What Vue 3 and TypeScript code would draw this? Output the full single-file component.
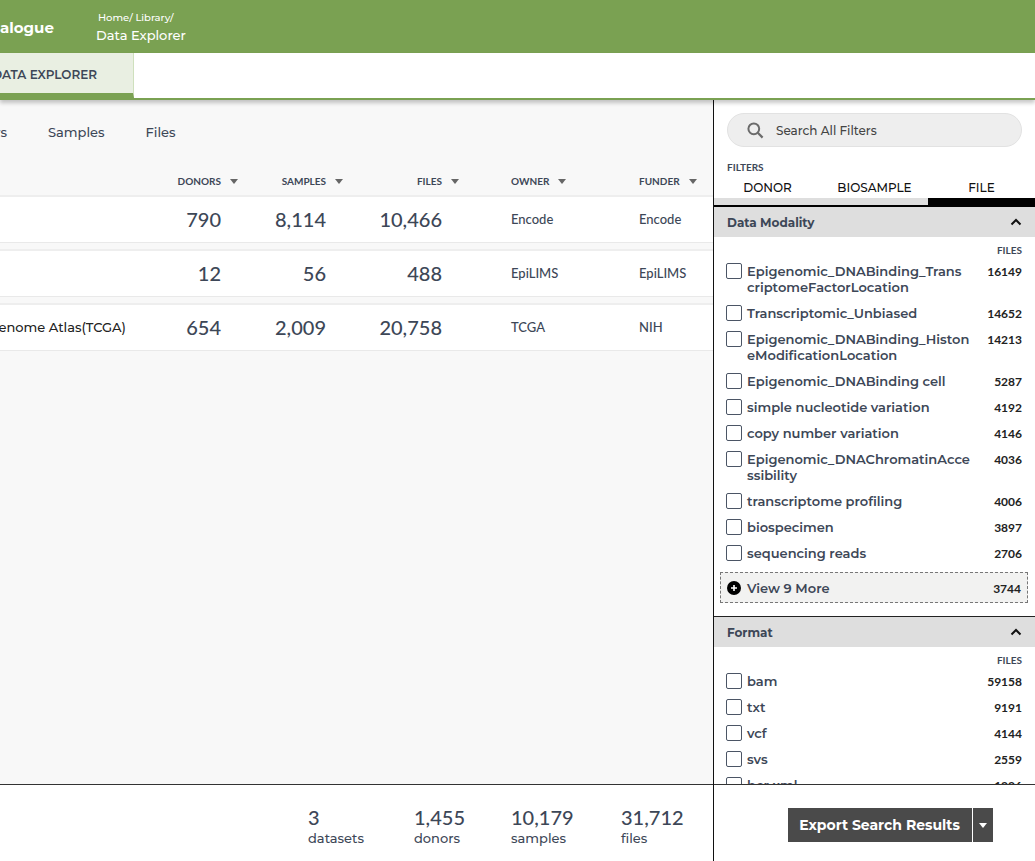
<script setup lang="ts">
import { ref } from 'vue'

interface Column { label: string; kind: string }
interface Dataset { name: string; donors: string; samples: string; files: string; owner: string; funder: string }
interface Option { label: string; count: string }
interface Section { title: string; options: Option[]; more?: Option }

const columns: Column[] = [
  { label: 'DONORS', kind: 'num' },
  { label: 'SAMPLES', kind: 'num' },
  { label: 'FILES', kind: 'num' },
  { label: 'OWNER', kind: 'text' },
  { label: 'FUNDER', kind: 'text' },
]

const datasets: Dataset[] = [
  { name: '', donors: '790', samples: '8,114', files: '10,466', owner: 'Encode', funder: 'Encode' },
  { name: '', donors: '12', samples: '56', files: '488', owner: 'EpiLIMS', funder: 'EpiLIMS' },
  { name: 'enome Atlas(TCGA)', donors: '654', samples: '2,009', files: '20,758', owner: 'TCGA', funder: 'NIH' },
]

const sections: Section[] = [
  {
    title: 'Data Modality',
    options: [
      { label: 'Epigenomic_DNABinding_Trans\ncriptomeFactorLocation', count: '16149' },
      { label: 'Transcriptomic_Unbiased', count: '14652' },
      { label: 'Epigenomic_DNABinding_Histon\neModificationLocation', count: '14213' },
      { label: 'Epigenomic_DNABinding cell', count: '5287' },
      { label: 'simple nucleotide variation', count: '4192' },
      { label: 'copy number variation', count: '4146' },
      { label: 'Epigenomic_DNAChromatinAcce\nssibility', count: '4036' },
      { label: 'transcriptome profiling', count: '4006' },
      { label: 'biospecimen', count: '3897' },
      { label: 'sequencing reads', count: '2706' },
    ],
    more: { label: 'View 9 More', count: '3744' },
  },
  {
    title: 'Format',
    options: [
      { label: 'bam', count: '59158' },
      { label: 'txt', count: '9191' },
      { label: 'vcf', count: '4144' },
      { label: 'svs', count: '2559' },
      { label: 'bcr xml', count: '1226' },
    ],
  },
]

const totals = [
  { value: '3', label: 'datasets' },
  { value: '1,455', label: 'donors' },
  { value: '10,179', label: 'samples' },
  { value: '31,712', label: 'files' },
]

const filterTabs = ['DONOR', 'BIOSAMPLE', 'FILE']
const activeFilter = ref('FILE')
const search = ref('')
const checked = ref<string[]>([])
</script>

<template>
  <div class="app">
    <header class="topbar">
      <a class="brand" href="#">alogue</a>
      <nav class="crumbs" aria-label="Breadcrumb">
        <span class="trail"><a href="#">Home/</a> <a href="#">Library/</a></span>
        <span class="here">Data Explorer</span>
      </nav>
    </header>
    <nav class="tabs"><a class="tab" href="#">DATA EXPLORER</a></nav>

    <div class="body">
      <div class="left">
        <main class="main">
          <nav class="views">
            <a class="view first" href="#">rs</a>
            <a class="view" href="#">Samples</a>
            <a class="view" href="#">Files</a>
          </nav>
          <table class="table">
            <colgroup>
              <col /><col class="w-num" /><col class="w-num" /><col class="w-files" /><col class="w-owner" /><col class="w-funder" />
            </colgroup>
            <thead>
              <tr>
                <th></th>
                <th v-for="c in columns" :key="c.label" :class="c.kind">
                  <button class="sort" type="button">{{ c.label }}<svg width="8" height="5" viewBox="0 0 8 5"><path d="M0 0h8L4 5z" fill="#666" /></svg></button>
                </th>
              </tr>
            </thead>
            <tbody>
              <tr v-for="d in datasets" :key="d.donors">
                <td class="name"><div>{{ d.name }}</div></td>
                <td class="num">{{ d.donors }}</td>
                <td class="num">{{ d.samples }}</td>
                <td class="num">{{ d.files }}</td>
                <td class="text">{{ d.owner }}</td>
                <td class="text">{{ d.funder }}</td>
              </tr>
            </tbody>
          </table>
        </main>
        <footer class="totals">
          <div v-for="t in totals" :key="t.label" class="total">
            <span class="value">{{ t.value }}</span>
            <span class="unit">{{ t.label }}</span>
          </div>
        </footer>
      </div>

      <aside class="side">
        <div class="filters">
          <label class="search">
            <svg width="17" height="17" viewBox="0 0 17 17" fill="none" stroke="#6b6b6b"><circle cx="6.8" cy="6.8" r="5.4" stroke-width="2" /><path d="M10.8 10.8l4.8 4.8" stroke-width="2.2" /></svg>
            <input v-model="search" type="text" placeholder="Search All Filters" aria-label="Search All Filters" />
          </label>
          <h2 class="caption">FILTERS</h2>
          <div class="ftabs">
            <button v-for="f in filterTabs" :key="f" type="button" class="ftab" :class="{ on: activeFilter === f }" @click="activeFilter = f">{{ f }}</button>
          </div>
          <section v-for="s in sections" :key="s.title" class="section">
            <button class="head" type="button">
              {{ s.title }}
              <svg width="12" height="8" viewBox="0 0 12 8" fill="none" stroke="#111" stroke-width="2"><path d="M1.5 6.5L6 2l4.5 4.5" /></svg>
            </button>
            <div class="colhead">FILES</div>
            <div class="options">
              <label v-for="o in s.options" :key="o.label" class="option">
                <input v-model="checked" type="checkbox" :value="o.label" />
                <span class="olabel">{{ o.label }}</span>
                <span class="count">{{ o.count }}</span>
              </label>
            </div>
            <button v-if="s.more" class="more" type="button">
              <svg width="14" height="14" viewBox="0 0 14 14"><circle cx="7" cy="7" r="7" fill="#000" /><path d="M7 4v6M4 7h6" stroke="#fff" stroke-width="1.6" /></svg>
              <span class="olabel">{{ s.more.label }}</span>
              <span class="count">{{ s.more.count }}</span>
            </button>
          </section>
        </div>
        <div class="export">
          <button class="export-main" type="button">Export Search Results</button>
          <button class="export-menu" type="button" aria-label="Export options">
            <svg width="8" height="5" viewBox="0 0 8 5"><path d="M0 0h8L4 5z" fill="#fff" /></svg>
          </button>
        </div>
      </aside>
    </div>
  </div>
</template>

<style>
body { background: #f8f8f8; }
</style>

<style scoped>
.app { height: 100vh; display: flex; flex-direction: column; overflow: hidden; color: #3d4757; font-family: Montserrat, Inter, sans-serif; font-size: 13px; font-weight: 500; }
* { box-sizing: border-box; }
a { color: inherit; text-decoration: none; }
button { font: inherit; color: inherit; background: none; border: 0; padding: 0; margin: 0; cursor: pointer; }
svg { flex: none; display: block; }

.topbar { flex: none; height: 53px; display: flex; align-items: center; padding-top: 2px; background: #7aa152; color: #fff; }
.brand { width: 96px; font-size: 15px; font-weight: 700; line-height: 20px; }
.crumbs { display: flex; flex-direction: column; }
.trail { padding-left: 2px; font-size: 10px; line-height: 14px; }
.here { line-height: 20px; }

.tabs { flex: none; height: 47px; display: flex; background: #fff; border-bottom: 2px solid #7aa152; box-shadow: 0 3px 4px rgba(0, 0, 0, 0.22); position: relative; z-index: 1; }
.tab { width: 134px; display: flex; align-items: center; justify-content: flex-end; padding: 2px 36px 0 0; background: #e9efe2; border-right: 1px solid #cfe0bd; border-bottom: 5px solid #7aa152; font-size: 12px; font-weight: 600; white-space: nowrap; }

.body { flex: 1; min-height: 0; display: flex; }
.left { flex: 1; min-width: 0; display: flex; flex-direction: column; }
.main { flex: 1; min-height: 0; overflow: hidden; background: #f8f8f8; }
.views { display: flex; gap: 41px; padding-top: 22px; line-height: 20px; }
.view.first { width: 7px; display: flex; justify-content: flex-end; }

.table { width: 100%; table-layout: fixed; border-collapse: separate; border-spacing: 0 6px; margin-top: 26px; font-family: Lato, sans-serif; }
.w-num { width: 105px; }
.w-files { width: 116px; }
.w-owner { width: 128px; }
.w-funder { width: 119px; }
th { height: 15px; padding: 0; font-size: 10px; line-height: 14px; text-align: left; vertical-align: top; }
th.num { padding-right: 7px; }
th.text { padding-left: 45px; }
.sort { display: flex; align-items: center; gap: 9px; font-weight: 700; }
.num .sort { margin-left: auto; }
td { height: 48px; padding: 0 0 2px; background: #fff; border-top: 2px solid #eee; border-bottom: 1px solid #e9e9e9; font-size: 13px; }
td.num { padding-right: 24px; text-align: right; font-size: 20px; }
td.text { padding-left: 45px; }
td.name { font-family: Montserrat, Inter, sans-serif; color: #222; white-space: nowrap; }
td.name div { width: 126px; display: flex; justify-content: flex-end; }

.totals { flex: none; height: 77px; display: flex; justify-content: flex-end; padding-top: 20px; background: #fff; border-top: 1px solid #333; }
.total { width: 97px; display: flex; flex-direction: column; }
.total:first-child { width: 106px; }
.total:nth-child(3) { width: 110px; }
.total:last-child { width: 92px; }
.value { font-family: Lato, sans-serif; font-size: 20px; line-height: 24px; }
.unit { line-height: 18px; }

.side { flex: none; width: 322px; display: flex; flex-direction: column; background: #fff; border-left: 1px solid #111; }
.filters { flex: 1; min-height: 0; overflow: hidden; }
.search { display: flex; align-items: center; gap: 12px; height: 34px; margin: 13px 13px 0; padding: 0 19px; border: 1px solid #e2e2e2; border-radius: 17px; background: #eee; }
.search input { flex: 1; min-width: 0; padding: 0; border: 0; outline: 0; background: none; font: inherit; font-size: 12px; color: #444; }
.search input::placeholder { color: #444; opacity: 1; }
.caption { margin: 13px 13px 0; font: 700 10px/14px Lato, sans-serif; }
.ftabs { display: flex; border-bottom: 2px solid #000; }
.ftab { flex: 1; height: 31px; padding-top: 3px; border-bottom: 7px solid #dedede; color: #111; font-size: 12px; line-height: 20px; }
.ftab.on { border-bottom-color: #000; }
.section + .section { margin-top: 13px; border-top: 1px solid #222; }
.head { width: 100%; height: 30px; display: flex; align-items: center; justify-content: space-between; padding: 0 13px; background: #dedede; font-size: 12px; font-weight: 700; }
.colhead { padding: 6px 13px 1px; text-align: right; font: 700 10px/14px Lato, sans-serif; }
.option { display: flex; align-items: flex-start; padding: 5px 13px 5px 12px; line-height: 16px; }
.option input { appearance: none; flex: none; width: 16px; height: 16px; margin: 0 5px 0 0; border: 1px solid #4b5565; border-radius: 2px; background: #fff; }
.option input:checked { background: #4b5565; }
.olabel { flex: 1; text-align: left; font-weight: 600; white-space: pre-line; }
.count { padding-top: 2px; font: 700 12px/14px Lato, sans-serif; color: #222; }
.more { width: calc(100% - 13px); height: 31px; margin: 6px 6px 0; padding: 0 6px; display: flex; align-items: center; gap: 6px; border: 1px dashed #777; background: #f2f2f1; }

.export { flex: none; height: 77px; display: flex; gap: 1px; justify-content: center; align-items: flex-start; padding: 23px 0 0 31px; border-top: 1px solid #333; }
.export-main, .export-menu { height: 34px; background: #4a4a4a; color: #fff; }
.export-main { width: 184px; font-size: 14px; font-weight: 700; }
.export-menu { width: 20px; display: flex; align-items: center; justify-content: center; }
</style>
